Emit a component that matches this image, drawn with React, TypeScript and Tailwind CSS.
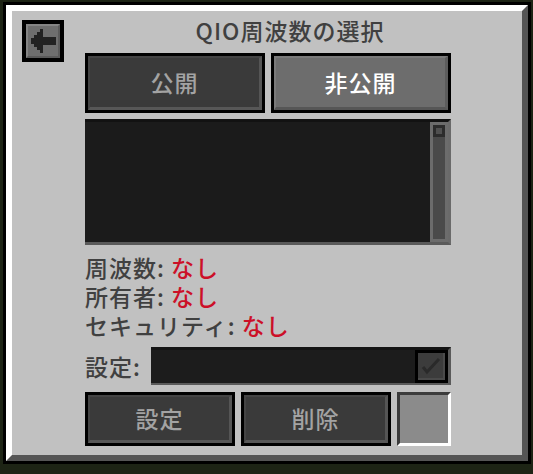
import React from 'react';

const font = { fontFamily: '"Noto Sans CJK JP", "Noto Sans", sans-serif' };

const McButton = ({
  label,
  active = false,
  className = '',
}: {
  label: string;
  active?: boolean;
  className?: string;
}) => (
  <div className={`border-[3px] border-black ${className}`}>
    <div
      className={
        active
          ? 'flex h-full w-full items-center justify-center border-t-[2px] border-l-[2px] border-b-[3px] border-r-[3px] border-t-[#7a7a7a] border-l-[#7a7a7a] border-b-[#565656] border-r-[#5c5c5c] bg-[#6d6d6d] text-[23px] font-medium tracking-[1px] text-white'
          : 'flex h-full w-full items-center justify-center border-t-[2px] border-l-[2px] border-b-[3px] border-r-[3px] border-t-[#444444] border-l-[#444444] border-b-[#575757] border-r-[#555555] bg-[#3a3a3a] text-[23px] font-medium tracking-[1px] text-[#a3a3a3]'
      }
    >
      {label}
    </div>
  </div>
);

const BackArrow = () => (
  <svg width="34" height="34" viewBox="0 0 34 34">
    <rect x="5" y="14" width="3" height="6" fill="#222" />
    <rect x="8" y="11" width="3" height="12" fill="#222" />
    <rect x="11" y="8" width="3" height="18" fill="#222" />
    <rect x="14" y="5" width="3" height="24" fill="#222" />
    <rect x="17" y="13" width="13" height="8" fill="#222" />
  </svg>
);

const InfoLine = ({ label }: { label: string }) => (
  <div className="flex h-[29px] items-center">
    <span className="inline-block h-[29px] leading-[29px]">{label}:&nbsp;</span>
    <span className="inline-block h-[29px] leading-[29px] text-[#cc1028]">なし</span>
  </div>
);

const App = () => {
  return (
    <div className="min-h-[474px] w-[533px] bg-[#1d2415] pt-[2px] pl-[3px]" style={font}>
      <div className="h-[462px] w-[528px] border-[3px] border-black">
        <div className="flex h-full w-full border-t-[6px] border-l-[6px] border-b-[6px] border-r-[6px] border-t-white border-l-white border-b-[#555555] border-r-[#555555] bg-[#c1c1c1]">
          {/* left column */}
          <div className="w-[73px] shrink-0 pt-[9px] pl-[10px]">
            <div className="h-[42px] w-[42px] border-[4px] border-black">
              <div className="h-full w-full border-t-[2px] border-l-[2px] border-b-[2px] border-r-[2px] border-t-[#858585] border-l-[#858585] border-b-[#5a5a5a] border-r-[#5a5a5a] bg-[#6e6e6e]">
                <div className="-mt-[2px] -ml-[2px]">
                  <BackArrow />
                </div>
              </div>
            </div>
          </div>

          {/* main column */}
          <div className="flex w-[366px] flex-col">
            <div className="h-[39px] pl-[44px] text-center text-[23px] font-medium leading-[39px] tracking-[1px] text-[#404040]">
              QIO周波数の選択
            </div>

            <div className="mt-[3px] flex gap-[6px]">
              <McButton label="公開" className="h-[60px] w-[180px]" />
              <McButton label="非公開" active className="h-[60px] w-[180px]" />
            </div>

            {/* list */}
            <div className="mt-[6px] flex h-[126px] border-t-[3px] border-b-[3px] border-r-[3px] border-t-[#121212] border-b-[#5a5a5a] border-r-[#6a6a6a] bg-[#1b1b1b]">
              <div className="flex-1" />
              <div className="flex h-[120px] w-[18px] flex-col border-[3px] border-[#6c6c6c] bg-[#4a4a4a]">
                <div className="flex h-[12px] w-[12px] items-center justify-center bg-[#2c2c2c]">
                  <div className="h-[6px] w-[6px] bg-[#505050]" />
                </div>
              </div>
            </div>

            {/* info */}
            <div className="mt-[8px] text-[23px] font-medium tracking-[1px] text-[#404040]">
              <InfoLine label="周波数" />
              <InfoLine label="所有者" />
              <InfoLine label="セキュリティ" />
            </div>

            {/* setting row */}
            <div className="mt-[7px] flex h-[38px] items-center">
              <div className="w-[66px] text-[23px] font-medium tracking-[1px] text-[#404040]">設定:</div>
              <div className="flex h-[38px] w-[300px] items-start justify-end border-t-[3px] border-b-[2px] border-r-[3px] border-t-[#141414] border-b-[#5a5a5a] border-r-[#5a5a5a] bg-[#1c1c1c]">
                <div className="h-[33px] w-[33px] border-[3px] border-black">
                  <div className="h-full w-full border-b-[2px] border-r-[2px] border-b-[#4a4a4a] border-r-[#4a4a4a] bg-[#3c3c3c]">
                    <svg width="25" height="25" viewBox="0 0 25 25">
                      <polyline
                        points="5,14 9,19 21,6"
                        fill="none"
                        stroke="#2a2a2a"
                        strokeWidth="3"
                        strokeLinejoin="miter"
                      />
                    </svg>
                  </div>
                </div>
              </div>
            </div>

            {/* bottom buttons */}
            <div className="mt-[7px] flex gap-[6px]">
              <McButton label="設定" className="h-[54px] w-[150px]" />
              <McButton label="削除" className="h-[54px] w-[150px]" />
              <div className="h-[54px] w-[54px] border-t-[3px] border-l-[3px] border-b-[3px] border-r-[3px] border-t-[#3b3b3b] border-l-[#3b3b3b] border-b-white border-r-white bg-[#8b8b8b]" />
            </div>
          </div>
        </div>
      </div>
    </div>
  );
};

export default App;
